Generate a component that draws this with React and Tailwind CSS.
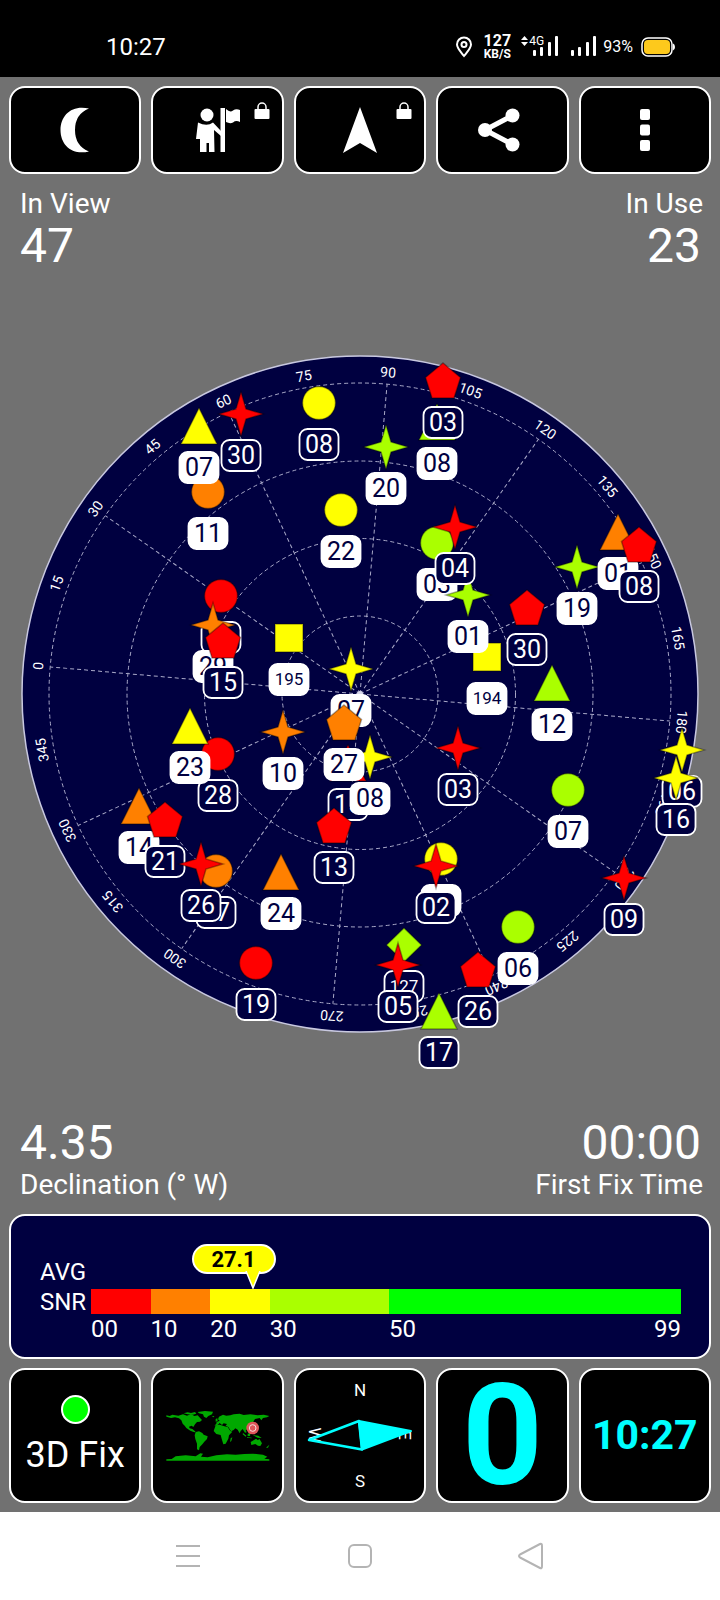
const RED = "#ff0000"
const ORANGE = "#ff8000"
const YELLOW = "#ffff00"
const LIME = "#aaff00"
const NAVY = "#000040"

const CX = 360
const CY = 694
const HEADING = 5

// later entries are painted over earlier ones
const satellites = [
  { shape: "circle", id: "11", x: 208, y: 492, color: ORANGE, used: true },
  { shape: "triangle", id: "07", x: 199, y: 426, color: YELLOW, used: true },
  { shape: "star", id: "30", x: 241, y: 414, color: RED },
  { shape: "circle", id: "08", x: 319, y: 403, color: YELLOW },
  { shape: "circle", id: "22", x: 341, y: 510, color: YELLOW, used: true },
  { shape: "star", id: "20", x: 386, y: 447, color: LIME, used: true },
  { shape: "triangle", id: "08", x: 437, y: 422, color: LIME, used: true },
  { shape: "pentagon", id: "03", x: 443, y: 381, color: RED },
  { shape: "circle", id: "03", x: 437, y: 543, color: LIME, used: true },
  { shape: "square", id: "194", x: 487, y: 657, color: YELLOW, used: true },
  { shape: "star", id: "01", x: 468, y: 595, color: LIME, used: true },
  { shape: "star", id: "04", x: 455, y: 527, color: RED },
  { shape: "star", id: "19", x: 577, y: 567, color: LIME, used: true },
  { shape: "triangle", id: "01", x: 618, y: 532, color: ORANGE, used: true },
  { shape: "pentagon", id: "08", x: 639, y: 545, color: RED },
  { shape: "circle", id: "", x: 221, y: 596, color: RED },
  { shape: "star", id: "29", x: 213, y: 625, color: ORANGE, used: true },
  { shape: "pentagon", id: "15", x: 223, y: 641, color: RED },
  { shape: "square", id: "195", x: 289, y: 638, color: YELLOW, used: true },
  { shape: "triangle", id: "15", x: 348, y: 763, color: RED },
  { shape: "star", id: "08", x: 370, y: 757, color: YELLOW, used: true },
  { shape: "star", id: "07", x: 351, y: 669, color: YELLOW, used: true },
  { shape: "pentagon", id: "27", x: 344, y: 723, color: ORANGE, used: true },
  { shape: "star", id: "10", x: 283, y: 732, color: ORANGE, used: true },
  { shape: "circle", id: "28", x: 218, y: 754, color: RED },
  { shape: "triangle", id: "23", x: 190, y: 726, color: YELLOW, used: true },
  { shape: "pentagon", id: "30", x: 527, y: 608, color: RED },
  { shape: "triangle", id: "12", x: 552, y: 683, color: LIME, used: true },
  { shape: "star", id: "03", x: 458, y: 748, color: RED },
  { shape: "circle", id: "07", x: 568, y: 790, color: LIME, used: true },
  { shape: "star", id: "06", x: 682, y: 750, color: YELLOW },
  { shape: "star", id: "16", x: 676, y: 778, color: YELLOW },
  { shape: "triangle", id: "14", x: 139, y: 806, color: ORANGE, used: true },
  { shape: "pentagon", id: "21", x: 165, y: 820, color: RED },
  { shape: "circle", id: "27", x: 216, y: 871, color: ORANGE },
  { shape: "star", id: "26", x: 201, y: 864, color: RED },
  { shape: "triangle", id: "24", x: 281, y: 872, color: ORANGE, used: true },
  { shape: "circle", id: "19", x: 256, y: 963, color: RED },
  { shape: "pentagon", id: "13", x: 334, y: 826, color: RED },
  { shape: "circle", id: "", x: 441, y: 859, color: YELLOW, used: true },
  { shape: "star", id: "02", x: 436, y: 866, color: RED },
  { shape: "star", id: "09", x: 624, y: 878, color: RED },
  { shape: "pentagon", id: "26", x: 478, y: 970, color: RED },
  { shape: "circle", id: "06", x: 518, y: 927, color: LIME, used: true },
  { shape: "diamond", id: "127", x: 404, y: 945, color: LIME },
  { shape: "star", id: "05", x: 398, y: 965, color: RED },
  { shape: "triangle", id: "17", x: 439, y: 1011, color: LIME },
]

const outlines = {
  star: "M0 -22L5 -5L22 0L5 5L0 22L-5 5L-22 0L-5 -5Z",
  triangle: "M0 -18L18 18H-18Z",
  pentagon: "M0 -18L17.500 -3.500L11 17H-11L-17.500 -3.500Z",
  square: "M-14 -14H14V14H-14Z",
  diamond: "M0 -17L17.500 0L0 17L-17.500 0Z",
  circle: "M-16.500 0A16.500 16.500 0 1 0 16.500 0A16.500 16.500 0 1 0 -16.500 0Z",
}

const snrBands = [
  { from: "00", className: "grow-[10] bg-[#ff0000]", labelClass: "grow-[10]" },
  { from: "10", className: "grow-[10] bg-[#ff8000]", labelClass: "grow-[10]" },
  { from: "20", className: "grow-[10] bg-[#ffff00]", labelClass: "grow-[10]" },
  { from: "30", className: "grow-[20] bg-[#aaff00]", labelClass: "grow-[20]" },
  { from: "50", to: "99", className: "grow-[49] bg-[#00ff00]", labelClass: "grow-[49]" },
]

function Satellite({ sat }) {
  const long = sat.id.length > 2
  return (
    <g transform={`translate(${sat.x} ${sat.y})`}>
      <path d={outlines[sat.shape]} fill={sat.color} stroke="#000" strokeOpacity="0.35" strokeWidth="1.500" />
      <rect
        x="-19.500"
        y="26"
        width="39"
        height="31"
        rx="8"
        fill={sat.used ? "#fff" : NAVY}
        stroke="#fff"
        strokeWidth="1.800"
      />
      {sat.id && (
        <text
          y={long ? 47 : 50}
          textAnchor="middle"
          fontSize={long ? 17 : 25}
          fill={sat.used ? NAVY : "#fff"}
        >
          {sat.id}
        </text>
      )}
    </g>
  )
}

function SkyPlot() {
  const spokes = Array.from({ length: 12 }, (_, i) => i * 30 + HEADING)
  const azimuths = Array.from({ length: 24 }, (_, i) => i * 15)

  return (
    <svg viewBox="0 272 720 845" className="block w-full" role="img" aria-label="Satellites in view">
      <circle cx={CX} cy={CY} r="338" fill={NAVY} stroke="#c8c8e0" strokeWidth="1.500" />
      <g fill="none" stroke="#a9a9c8" strokeWidth="1" strokeDasharray="4 3">
        {[78, 155.5, 233, 311].map((r) => (
          <circle key={r} cx={CX} cy={CY} r={r} />
        ))}
        {spokes.map((a) => (
          <path key={a} d={`M${CX} ${CY}v-311`} transform={`rotate(${a} ${CX} ${CY})`} />
        ))}
      </g>
      <circle cx={CX} cy={CY} r="3" fill="#d8d8ea" />
      <g fontSize="14" fill="#fff" textAnchor="middle">
        {azimuths.map((a) => (
          <text key={a} x={CX} y="376" transform={`rotate(${a - 90 + HEADING} ${CX} ${CY})`}>
            {a}
          </text>
        ))}
      </g>
      {satellites.map((sat, i) => (
        <Satellite key={i} sat={sat} />
      ))}
    </svg>
  )
}

function SignalBars() {
  return (
    <svg width="26" height="21" viewBox="0 0 26 21" fill="#fff">
      <rect x="0" y="14" width="3" height="6" rx="1" />
      <rect x="7" y="11" width="3" height="9" rx="1" />
      <rect x="15" y="6" width="3" height="14" rx="1" />
      <rect x="22" y="0" width="3" height="20" rx="1" />
    </svg>
  )
}

function StatusBar() {
  return (
    <div className="flex h-[77px] items-center justify-between bg-black pl-[106px] pr-[45px] pt-4">
      <span className="text-[24px] leading-7">10:27</span>
      <div className="flex items-center">
        <svg width="18" height="22" viewBox="0 0 18 22" fill="none" stroke="#fff" strokeWidth="2">
          <path d="M9 20C5 15 2 12 2 8.500A7 7 0 0 1 16 8.500C16 12 13 15 9 20Z" />
          <circle cx="9" cy="8.500" r="2.500" />
        </svg>
        <div className="ml-2.5 w-7 text-center font-bold">
          <div className="text-[16px] leading-[14px]">127</div>
          <div className="text-[12px] leading-[12px]">KB/S</div>
        </div>
        <div className="relative ml-[22px]">
          <SignalBars />
          <div className="absolute -left-3 -top-px flex items-center gap-px">
            <svg width="7" height="12" viewBox="0 0 7 12" fill="#fff">
              <path d="M3.500 1L7 5H0ZM3.500 11L0 7H7Z" />
            </svg>
            <span className="text-[12px] leading-3">4G</span>
          </div>
        </div>
        <div className="ml-3">
          <SignalBars />
        </div>
        <span className="ml-1.5 text-[16px] leading-5">93%</span>
        <svg className="ml-2" width="34" height="20" viewBox="0 0 34 20">
          <rect x="1" y="1" width="30" height="18" rx="6" fill="none" stroke="#fff" strokeWidth="1.500" />
          <rect x="3" y="3" width="26" height="14" rx="4" fill="#fdc91c" />
          <path d="M32 6.500Q34 7 34 10T32 13.500Z" fill="#fff" />
        </svg>
      </div>
    </div>
  )
}

function Lock() {
  return (
    <svg className="absolute right-3 top-3.5" width="16" height="17" viewBox="0 0 16 17">
      <path d="M4 8V5A4 4 0 0 1 12 5V8" fill="none" stroke="#fff" strokeWidth="1.500" />
      <rect x="0.500" y="7" width="15" height="10" rx="1" fill="#fff" />
    </svg>
  )
}

function ToolButton({ label, locked, children }) {
  return (
    <button
      type="button"
      aria-label={label}
      className="relative flex h-[88px] items-center justify-center rounded-2xl border-2 border-white bg-black"
    >
      {children}
      {locked && <Lock />}
    </button>
  )
}

function Toolbar() {
  return (
    <div className="grid grid-cols-5 gap-2.5 px-[9px] pt-[9px]">
      <ToolButton label="Night mode">
        <svg width="30" height="46" viewBox="0 0 30 46" fill="#fff">
          <path d="M29 1.500C12 -2.500 0.500 8 0.500 23S12 48.500 29 44.500Q15 39 15 23T29 1.500Z" />
        </svg>
      </ToolButton>
      <ToolButton label="Guide" locked>
        <svg width="46" height="46" viewBox="0 0 46 46" fill="#fff">
          <circle cx="12" cy="8" r="6.500" />
          <path d="M3 15.500Q12 20 18 15.500L26 24V29L19 23L19.500 45H14V36H11.500V45H5V32H1Z" />
          <rect x="25.500" y="1" width="4.500" height="44" />
          <path d="M31 2Q35 6 38 3.500Q41 1.500 45 3V15Q41 13 38 15.500Q35 17 31 15Z" />
        </svg>
      </ToolButton>
      <ToolButton label="Navigate" locked>
        <svg width="36" height="48" viewBox="0 0 36 48" fill="#fff">
          <path d="M18 1L35 47L18 37L1 47Z" />
        </svg>
      </ToolButton>
      <ToolButton label="Share">
        <svg width="50" height="46" viewBox="0 0 50 46" fill="#fff">
          <path d="M35.500 8.500L8 23L35.500 37.500" fill="none" stroke="#fff" strokeWidth="5" />
          <circle cx="35.500" cy="8.500" r="7" />
          <circle cx="8" cy="23" r="7" />
          <circle cx="35.500" cy="37.500" r="7" />
        </svg>
      </ToolButton>
      <ToolButton label="More">
        <svg width="10" height="42" viewBox="0 0 10 42" fill="#fff">
          <rect width="10" height="11" rx="2" />
          <rect y="15.500" width="10" height="11" rx="2" />
          <rect y="31" width="10" height="11" rx="2" />
        </svg>
      </ToolButton>
    </div>
  )
}

function SnrPanel() {
  const avg = 27.1
  return (
    <div className="mx-[9px] mt-[13px] flex rounded-2xl border-2 border-white bg-[#000040] pb-[13px] pl-[29px] pr-7 pt-[41px]">
      <div className="w-[51px] text-[24px] leading-[30px]">
        <div>AVG</div>
        <div>SNR</div>
      </div>
      <div className="flex-1 pt-8">
        <div className="relative flex h-[25px]">
          {snrBands.map((band) => (
            <div key={band.from} className={`basis-0 ${band.className}`} />
          ))}
          {/* average marker */}
          <div className="absolute bottom-full -ml-[61px] h-[45px] w-[84px]" style={{ left: `${(avg / 99) * 100}%` }}>
            <div className="flex h-[30px] items-center justify-center rounded-full border-2 border-white bg-[#ffff00] text-[22px] font-bold text-black">
              {avg}
            </div>
            <svg className="absolute left-[53px] top-[27px]" width="16" height="18" viewBox="0 0 16 18">
              <path d="M1 0L8 17L15 0" fill={YELLOW} stroke="#fff" strokeWidth="1.500" />
            </svg>
          </div>
        </div>
        <div className="flex text-[24px] leading-[30px]">
          {snrBands.map((band) => (
            <div key={band.from} className={`flex w-0 basis-0 justify-between ${band.labelClass}`}>
              <span>{band.from}</span>
              {band.to && <span>{band.to}</span>}
            </div>
          ))}
        </div>
      </div>
    </div>
  )
}

function WorldMap() {
  return (
    <svg width="104" height="50" viewBox="48 50 310 150" fill="#00a800">
      <path d="M48 63L58 65L66 61L84 64L98 60L110 64L122 59L132 65L142 63L150 72L155 77L149 82L140 83L134 90L129 98L124 94L116 97L118 102L126 104L136 112L132 114L120 109L108 101L103 94L97 88L93 78L86 72L74 69L62 71L48 67Z" />
      <path d="M100 57L112 54L122 56L134 53L138 58L128 61L112 60Z" />
      <path d="M142 53L164 50L188 52L185 60L174 65L168 71L161 67L158 60L146 57Z" />
      <path d="M136 113L146 111L156 116L160 121L172 126L170 134L162 142L156 150L148 158L146 168L140 165L140 148L135 134L133 123Z" />
      <path d="M184 66L192 65L190 69ZM196 74L201 72L202 80L196 82Z" />
      <path d="M192 94L198 88L199 83L208 79L203 75L206 67L218 61L228 64L240 63L250 60L268 58L280 62L300 60L322 63L340 61L357 65L350 69L338 71L333 78L328 71L314 74L308 84L304 91L298 87L299 96L294 104L286 107L289 114L284 115L277 104L271 110L268 117L262 106L255 102L250 107L242 111L234 98L226 94L230 89L220 87L215 92L208 86L203 91Z" />
      <path d="M196 93L208 91L222 96L232 98L240 110L246 112L236 123L234 133L226 148L219 150L214 133L211 122L198 119L190 110Z" />
      <path d="M241 132L246 129L243 140L239 143ZM278 116L288 124L286 127L277 120ZM292 118L301 115L299 125L292 125ZM290 128L304 130L304 132L290 130ZM307 122L324 124L334 131L322 130Z" />
      <path d="M301 143L311 137L317 133L323 138L327 133L335 147L330 155L323 154L315 149L303 152Z" />
      <path d="M347 160L357 151L353 160Z" />
      <path d="M64 194L76 186L106 183L136 186L150 177L158 178L152 187L172 189L198 183L230 180L256 181L282 179L308 178L338 181L351 187L342 193L357 195V199H48V195Z" />
      <circle cx="307" cy="101" r="19" fill="#e0575a" />
      <circle cx="307" cy="101" r="10" fill="none" stroke="#f6dcdc" strokeWidth="3" />
    </svg>
  )
}

function Compass() {
  return (
    <svg width="128" height="131" viewBox="296 1370 128 131" fontSize="17" fill="#fff" textAnchor="middle">
      <text x="360" y="1396">N</text>
      <text x="360" y="1487">S</text>
      <text transform="translate(309 1435) rotate(90)">W</text>
      <text transform="translate(399 1435) rotate(90)">E</text>
      <path d="M359 1421L309 1440L362 1449.500Z" fill="none" stroke="#00ffff" strokeWidth="2.500" strokeLinejoin="round" />
      <path d="M359 1421L411 1431L362 1449.500Z" fill="#00ffff" stroke="#00ffff" strokeWidth="2" strokeLinejoin="round" />
    </svg>
  )
}

function Tile({ label, children }) {
  return (
    <button
      type="button"
      aria-label={label}
      className="flex h-[135px] flex-col items-center justify-center rounded-2xl border-2 border-white bg-black"
    >
      {children}
    </button>
  )
}

function Tiles() {
  return (
    <div className="grid grid-cols-5 gap-2.5 px-[9px] py-[9px]">
      <Tile label="Fix status">
        <span className="size-[29px] rounded-full border-2 border-white bg-[#00ff00]" />
        <span className="mt-2.5 text-[36px] leading-[42px]">3D Fix</span>
      </Tile>
      <Tile label="World map">
        <WorldMap />
      </Tile>
      <Tile label="Compass">
        <Compass />
      </Tile>
      <Tile label="Speed">
        <span className="text-[141px] font-bold leading-[131px] text-[#00ffff]">0</span>
      </Tile>
      <Tile label="Clock">
        <span className="text-[41px] font-bold leading-none text-[#00ffff]">10:27</span>
      </Tile>
    </div>
  )
}

function NavBar() {
  return (
    <nav className="flex h-[88px] justify-center bg-white">
      <button type="button" aria-label="Recent apps" className="flex w-[172px] items-center justify-center">
        <svg width="24" height="24" viewBox="0 0 24 24" stroke="#b4b4b4" strokeWidth="2">
          <path d="M0 2H24M0 12H24M0 22H24" />
        </svg>
      </button>
      <button type="button" aria-label="Home" className="flex w-[172px] items-center justify-center">
        <svg width="24" height="24" viewBox="0 0 24 24" fill="none" stroke="#b4b4b4" strokeWidth="2">
          <rect x="1" y="1" width="22" height="22" rx="5" />
        </svg>
      </button>
      <button type="button" aria-label="Back" className="flex w-[172px] items-center justify-center">
        <svg width="28" height="28" viewBox="0 0 28 28" fill="none" stroke="#b4b4b4" strokeWidth="2" strokeLinejoin="round">
          <path d="M22 2Q24 1 24 4V24Q24 27 22 26L2 15.500Q0 14 2 12.500Z" />
        </svg>
      </button>
    </nav>
  )
}

function App() {
  return (
    <div className="flex min-h-screen flex-col bg-[#717171] font-['Roboto',sans-serif] text-white">
      <StatusBar />
      <Toolbar />

      <div className="flex justify-between pl-5 pr-[17px] pt-[14px]">
        <div>
          <div className="text-[28px] leading-8">In View</div>
          <div className="text-[48px] leading-[52px]">47</div>
        </div>
        <div className="text-right">
          <div className="text-[28px] leading-8">In Use</div>
          <div className="pr-0.5 text-[48px] leading-[52px]">23</div>
        </div>
      </div>

      <SkyPlot />

      <div className="flex justify-between pl-5 pr-[17px]">
        <div>
          <div className="text-[48px] leading-[52px]">4.35</div>
          <div className="text-[28px] leading-8">Declination (° W)</div>
        </div>
        <div className="text-right">
          <div className="pr-0.5 text-[48px] leading-[52px]">00:00</div>
          <div className="text-[28px] leading-8">First Fix Time</div>
        </div>
      </div>

      <SnrPanel />
      <Tiles />
      <NavBar />
    </div>
  )
}

export default App
